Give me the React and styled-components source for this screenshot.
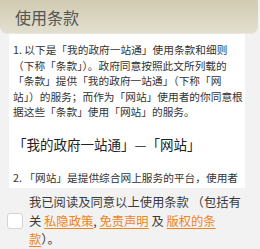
import React from 'react';
import styled, { createGlobalStyle } from 'styled-components';

const GlobalStyle = createGlobalStyle`
  html, body {
    margin: 0;
    padding: 0;
    background: #f2f2f2;
  }
  body {
    font-family: "Noto Sans CJK SC", "Noto Sans", sans-serif;
    word-break: break-all;
    overflow: hidden;
  }
`;

const Page = styled.div`
  width: 260px;
  height: 249px;
  display: flex;
  flex-direction: column;
  background: #f2f2f2;
  overflow: hidden;
`;

const Header = styled.div`
  flex: none;
  height: 34px;
  margin-right: 2px;
  display: flex;
  align-items: center;
  padding-left: 15px;
  border-radius: 0 0 7px 7px;
  background: linear-gradient(to bottom, #d0cbb1, #e3e0d0);
  box-shadow: inset 0 -1px 0 #ebe9de;
`;

const Title = styled.h1`
  margin: 0;
  font-size: 16px;
  font-weight: 400;
  color: #555;
  line-height: 20px;
`;

const Panel = styled.div`
  flex: none;
  margin-left: 9px;
  width: 236px;
  height: 154px;
  box-sizing: border-box;
  padding: 8px 0 0 4px;
  background: #fff;
  overflow: hidden;
  color: #333;
`;

const Para = styled.p`
  margin: 0;
  font-size: 10.7px;
  line-height: 15.5px;
`;

const Heading = styled.h2`
  margin: 14.5px 0 16px;
  font-size: 13.5px;
  font-weight: 400;
  line-height: 20px;
  color: #222;
`;

const Footer = styled.label`
  display: flex;
  align-items: center;
  gap: 6px;
  padding: 5px 0 0 7px;
`;

const Box = styled.span`
  flex: none;
  width: 14px;
  height: 14px;
  background: #fff;
  border: 1px solid #d4d4d4;
  border-radius: 3px;
`;

const Agree = styled.div`
  width: 215px;
  font-size: 12.3px;
  line-height: 18.5px;
  color: #3a3a3a;
`;

const Link = styled.a`
  color: #ee8420;
  text-decoration: underline;
  text-underline-offset: 2px;
`;

export default function App() {
  return (
    <Page>
      <GlobalStyle />
      <Header>
        <Title>使用条款</Title>
      </Header>
      <Panel>
        <Para>
          1. 以下是「我的政府一站通」使用条款和细则（下称「条款」）。政府同意按照此文所列载的「条款」提供「我的政府一站通」（下称「网<br />站」）的服务；而作为「网站」使用者的你同意根据这些「条款」使用「网站」的服务。
        </Para>
        <Heading>「我的政府一站通」—「网站」</Heading>
        <Para>
          2. 「网站」是提供综合网上服务的平台，使用者（包括市民及企业）可以透过「网站」使用各项政府网上服务。
        </Para>
      </Panel>
      <Footer>
        <Box />
        <Agree>
          我已阅读及同意以上使用条款 （包括有关 <Link>私隐政策</Link>, <Link>免责声明</Link> 及 <Link>版权的条款</Link>）。
        </Agree>
      </Footer>
    </Page>
  );
}
